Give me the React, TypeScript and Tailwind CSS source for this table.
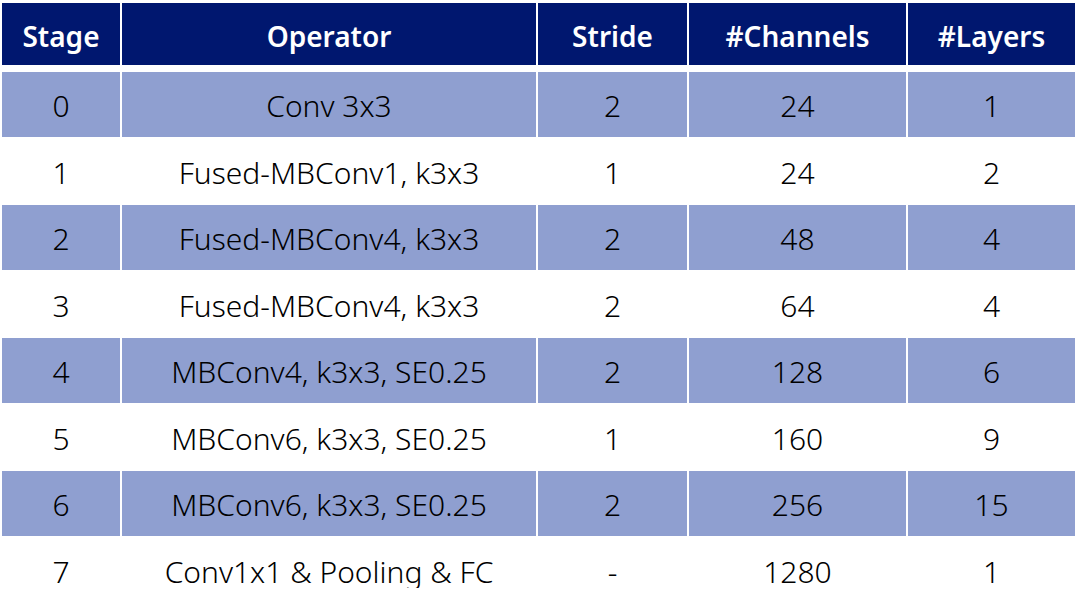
const columns = ["Stage", "Operator", "Stride", "#Channels", "#Layers"];

const rows: [string, string, string, string, string][] = [
  ["0", "Conv 3x3", "2", "24", "1"],
  ["1", "Fused-MBConv1, k3x3", "1", "24", "2"],
  ["2", "Fused-MBConv4, k3x3", "2", "48", "4"],
  ["3", "Fused-MBConv4, k3x3", "2", "64", "4"],
  ["4", "MBConv4, k3x3, SE0.25", "2", "128", "6"],
  ["5", "MBConv6, k3x3, SE0.25", "1", "160", "9"],
  ["6", "MBConv6, k3x3, SE0.25", "2", "256", "15"],
  ["7", "Conv1x1 & Pooling & FC", "-", "1280", "1"],
];

const gridCols = "grid grid-cols-[118px_414px_149px_217px_167px] gap-x-[2px]";

export default function App() {
  return (
    <div
      className="w-[1082px] h-[607px] bg-white pl-[2px] pt-[3px]"
      style={{ fontFamily: '"Noto Sans", "Open Sans", sans-serif' }}
    >
      <div className="h-[585px] overflow-hidden">
        <div className={`${gridCols} h-[62px]`}>
          {columns.map((c) => (
            <div
              key={c}
              className="flex items-center justify-center pt-[3px] bg-[#00176f] text-white text-[28px] font-semibold"
            >
              {c}
            </div>
          ))}
        </div>

        <div className="mt-[7px] flex flex-col gap-y-[2px]">
          {rows.map((r, i) => (
            <div key={i} className={`${gridCols} h-[64.5px]`}>
              {r.map((cell, j) => (
                <div
                  key={j}
                  className={`flex items-center justify-center pt-[3px] text-[30px] font-light text-black ${
                    i % 2 === 0 ? "bg-[#8f9fd0]" : "bg-white"
                  }`}
                >
                  {cell}
                </div>
              ))}
            </div>
          ))}
        </div>
      </div>
    </div>
  );
}
